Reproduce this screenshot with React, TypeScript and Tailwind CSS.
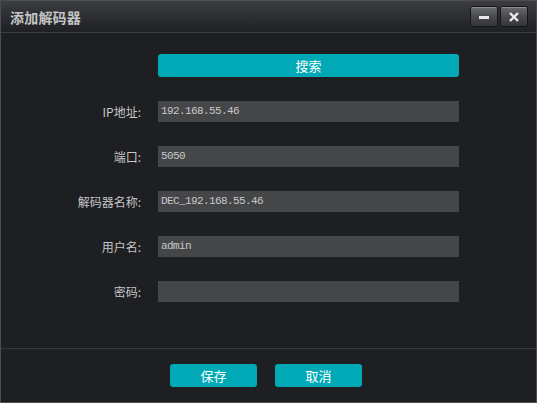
const cjk = '"Noto Sans CJK SC", "Liberation Sans", sans-serif'

const fields = [
  { label: 'IP地址:', value: '192.168.55.46' },
  { label: '端口:', value: '5050' },
  { label: '解码器名称:', value: 'DEC_192.168.55.46' },
  { label: '用户名:', value: 'admin' },
  { label: '密码:', value: '' },
]

function TitleButton({ children }: { children: React.ReactNode }) {
  return (
    <div className="flex h-[21px] w-[28px] items-center justify-center rounded-[2px] border border-[#141517] bg-gradient-to-b from-[#6a6b6f] via-[#4a4b4f] to-[#343539] shadow-[inset_0_1px_0_rgba(255,255,255,0.25)]">
      {children}
    </div>
  )
}

export default function App() {
  return (
    <div
      className="flex h-[403px] w-[537px] flex-col border border-[#4c4d52] bg-[#1e1f23]"
      style={{ fontFamily: cjk }}
    >
      {/* title bar */}
      <div className="flex h-[32px] shrink-0 items-center justify-between border-b border-[#3d3e42] bg-gradient-to-b from-[#3c3d41] to-[#1f2024] pl-[9px] pr-[8px]">
        <span className="text-[14px] font-bold leading-none tracking-[0.2px] text-[#c4c4c4]">添加解码器</span>
        <div className="flex gap-[2px]">
          <TitleButton>
            <div className="mt-[2px] h-[3px] w-[10px] bg-[#e8e8e8]" />
          </TitleButton>
          <TitleButton>
            <svg width="12" height="12" viewBox="0 0 12 12">
              <path d="M2 2 L10 10 M10 2 L2 10" stroke="#ececec" strokeWidth="2.4" />
            </svg>
          </TitleButton>
        </div>
      </div>

      {/* form */}
      <div className="flex flex-1 flex-col pl-[157px] pt-[21px]">
        <button
          type="button"
          className="h-[23px] w-[301px] rounded-[3px] bg-[#00a9b5] text-[13px] leading-none text-white"
        >
          搜索
        </button>
        <div className="mt-[24px] flex flex-col gap-[24px]">
          {fields.map((f) => (
            <div key={f.label} className="flex items-center">
              <span className="-ml-[157px] w-[140px] shrink-0 text-right text-[12px] leading-none text-[#c6c6c6]">
                {f.label}
              </span>
              <div className="ml-[17px] flex h-[21px] w-[301px] items-center bg-[#454648] pl-[3px]">
                <span
                  className="text-[11px] leading-none tracking-[-0.6px] text-[#c8c8c8]"
                  style={{ fontFamily: '"Liberation Mono", monospace' }}
                >
                  {f.value}
                </span>
              </div>
            </div>
          ))}
        </div>
      </div>

      {/* footer */}
      <div className="flex h-[54px] shrink-0 gap-[18px] border-t border-[#37383c] pl-[169px] pt-[15px]">
        <button
          type="button"
          className="h-[23px] w-[87px] rounded-[3px] bg-[#00a9b5] text-[13px] leading-none text-white"
        >
          保存
        </button>
        <button
          type="button"
          className="h-[23px] w-[87px] rounded-[3px] bg-[#00a9b5] text-[13px] leading-none text-white"
        >
          取消
        </button>
      </div>
    </div>
  )
}
